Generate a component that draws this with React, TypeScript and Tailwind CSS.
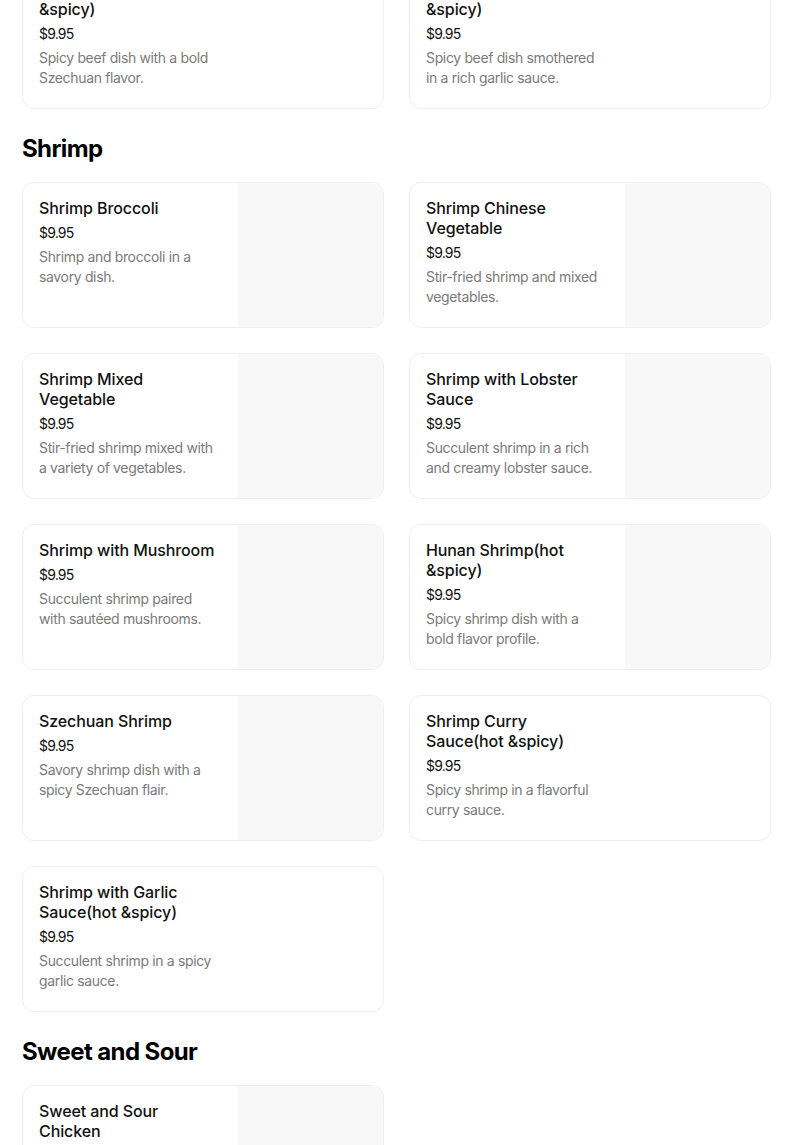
import React from 'react';

type Item = {
  name: string;
  desc: string;
  price: string;
  image?: boolean;
};

type Section = {
  title?: string;
  items: Item[];
};

const sections: Section[] = [
  {
    items: [
      { name: 'Szechuan Beef(hot &spicy)', desc: 'Spicy beef dish with a bold Szechuan flavor.', price: '$9.95' },
      { name: 'Beef Garlic Sauce(hot &spicy)', desc: 'Spicy beef dish smothered in a rich garlic sauce.', price: '$9.95' },
    ],
  },
  {
    title: 'Shrimp',
    items: [
      { name: 'Shrimp Broccoli', desc: 'Shrimp and broccoli in a savory dish.', price: '$9.95', image: true },
      { name: 'Shrimp Chinese Vegetable', desc: 'Stir-fried shrimp and mixed vegetables.', price: '$9.95', image: true },
      { name: 'Shrimp Mixed Vegetable', desc: 'Stir-fried shrimp mixed with a variety of vegetables.', price: '$9.95', image: true },
      { name: 'Shrimp with Lobster Sauce', desc: 'Succulent shrimp in a rich and creamy lobster sauce.', price: '$9.95', image: true },
      { name: 'Shrimp with Mushroom', desc: 'Succulent shrimp paired with sautéed mushrooms.', price: '$9.95', image: true },
      { name: 'Hunan Shrimp(hot &spicy)', desc: 'Spicy shrimp dish with a bold flavor profile.', price: '$9.95', image: true },
      { name: 'Szechuan Shrimp', desc: 'Savory shrimp dish with a spicy Szechuan flair.', price: '$9.95', image: true },
      { name: 'Shrimp Curry Sauce(hot &spicy)', desc: 'Spicy shrimp in a flavorful curry sauce.', price: '$9.95' },
      { name: 'Shrimp with Garlic Sauce(hot &spicy)', desc: 'Succulent shrimp in a spicy garlic sauce.', price: '$9.95' },
    ],
  },
  {
    title: 'Sweet and Sour',
    items: [
      { name: 'Sweet and Sour Chicken', desc: 'Crispy chicken tossed in a tangy sweet and sour sauce.', price: '$9.95', image: true },
    ],
  },
];

const MenuCard: React.FC<{ item: Item }> = ({ item }) => (
  <div className="flex h-[146px] overflow-hidden rounded-xl border border-[#efefef] bg-white">
    <div className="w-[215px] shrink-0 pl-4 pr-[21px] pt-[15px]">
      <h3 className="text-[16px] font-medium leading-5 tracking-[-0.1px] text-[#111]">{item.name}</h3>
      <p className="mt-[5px] text-[14px] leading-5 tracking-[-0.8px] text-[#111]">{item.price}</p>
      <p className="mt-1 text-[14px] leading-5 tracking-[-0.35px] text-[#7a7a7a]">{item.desc}</p>
    </div>
    {item.image && <div className="flex-1 bg-[#f8f8f8]" />}
  </div>
);

const App: React.FC = () => {
  return (
    <div className="min-h-screen bg-white font-['Inter',sans-serif] antialiased">
      <div className="w-[749px] ml-[22px] -mt-[37px] pb-10">
        {sections.map((section, i) => (
          <section key={i} className={section.title ? 'mt-6' : ''}>
            {section.title && (
              <h2 className="mb-[17px] text-[24px] font-bold leading-8 tracking-[-0.6px] text-black">
                {section.title}
              </h2>
            )}
            <div className="grid grid-cols-2 gap-[25px]">
              {section.items.map((item) => (
                <MenuCard key={item.name} item={item} />
              ))}
            </div>
          </section>
        ))}
      </div>
    </div>
  );
};

export default App;
